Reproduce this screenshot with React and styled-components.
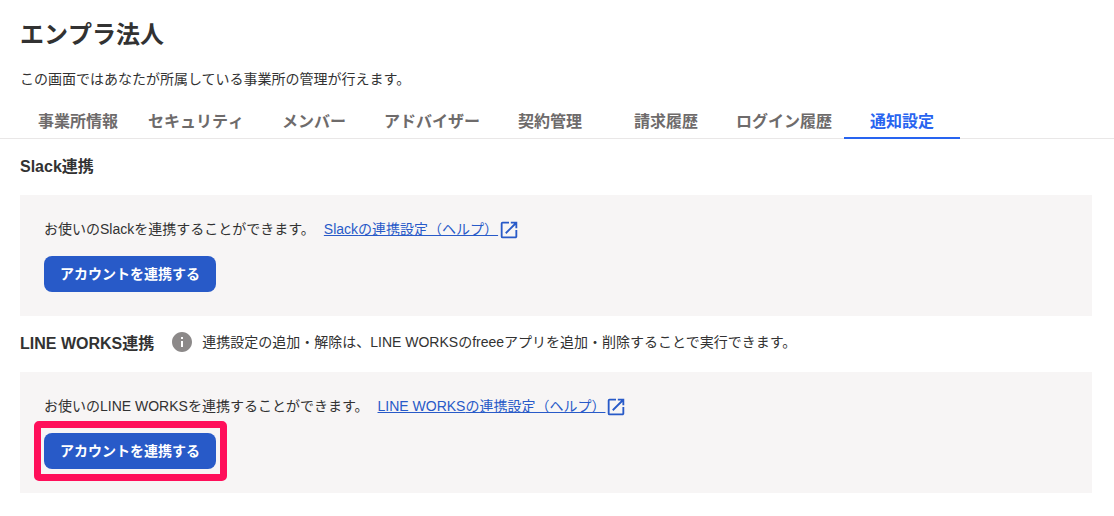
import styled, { createGlobalStyle } from "styled-components";

const tabs = [
  "事業所情報",
  "セキュリティ",
  "メンバー",
  "アドバイザー",
  "契約管理",
  "請求履歴",
  "ログイン履歴",
  "通知設定",
];

const OpenInNewIcon = () => (
  <LinkIcon viewBox="0 0 24 24" aria-hidden="true">
    <path d="M19 19H5V5h7V3H5a2 2 0 0 0-2 2v14a2 2 0 0 0 2 2h14c1.1 0 2-.9 2-2v-7h-2v7zM14 3v2h3.59l-9.83 9.83 1.41 1.41L19 6.41V10h2V3h-7z" />
  </LinkIcon>
);

const InfoIcon = () => (
  <NoteIcon viewBox="0 0 24 24" aria-hidden="true">
    <path d="M12 2C6.48 2 2 6.48 2 12s4.48 10 10 10 10-4.48 10-10S17.52 2 12 2zm1 15h-2v-6h2v6zm0-8h-2V7h2v2z" />
  </NoteIcon>
);

const Integration = ({ name, note, highlighted }) => (
  <section>
    <SectionHeader>
      <SectionTitle>{name}連携</SectionTitle>
      {note && (
        <Note>
          <InfoIcon />
          {note}
        </Note>
      )}
    </SectionHeader>
    <Panel>
      <Description>
        <span>お使いの{name}を連携することができます。</span>
        <HelpLink href="#help">
          <span>{name}の連携設定（ヘルプ）</span>
          <OpenInNewIcon />
        </HelpLink>
      </Description>
      <ButtonWrapper>
        <Button type="button">アカウントを連携する</Button>
        {highlighted && <Highlight />}
      </ButtonWrapper>
    </Panel>
  </section>
);

const App = () => (
  <>
    <GlobalStyle />
    <Header>
      <Title>エンプラ法人</Title>
      <Lead>この画面ではあなたが所属している事業所の管理が行えます。</Lead>
    </Header>
    <TabBar>
      {tabs.map((tab) => (
        <Tab
          key={tab}
          href="#tab"
          $active={tab === "通知設定"}
          aria-current={tab === "通知設定" ? "page" : undefined}
        >
          {tab}
        </Tab>
      ))}
    </TabBar>
    <Main>
      <Integration name="Slack" />
      <Integration
        name="LINE WORKS"
        note="連携設定の追加・解除は、LINE WORKSのfreeeアプリを追加・削除することで実行できます。"
        highlighted
      />
    </Main>
  </>
);

export default App;

const GlobalStyle = createGlobalStyle`
  * {
    box-sizing: border-box;
  }
  body {
    margin: 0;
    background-color: #fff;
    color: #323232;
    font-family: "Liberation Sans", "Noto Sans CJK JP", sans-serif;
    font-size: 14px;
    line-height: 21px;
  }
`;

const Header = styled.header`
  padding: 17px 20px 0;
`;

const Title = styled.h1`
  margin: 0 0 16px;
  font-size: 24px;
  line-height: 36px;
  font-kerning: none;
`;

const Lead = styled.p`
  margin: 0;
`;

const TabBar = styled.nav`
  display: flex;
  margin-top: 13px;
  padding: 0 20px;
  box-shadow: inset 0 -1px 0 #e9e7e7;
`;

const Tab = styled.a`
  min-width: 116px;
  padding: 8px 12px 4px;
  border-bottom: 2px solid ${({ $active }) => ($active ? "#2864f0" : "transparent")};
  color: ${({ $active }) => ($active ? "#2864f0" : "#6e6b6b")};
  font-size: 16px;
  font-weight: bold;
  font-kerning: none;
  line-height: 22px;
  text-align: center;
  text-decoration: none;
  white-space: nowrap;
`;

const Main = styled.main`
  padding: 16px 22px 24px 20px;
`;

const SectionHeader = styled.div`
  display: flex;
  align-items: flex-start;
  gap: 16px;
  min-height: 24px;
  margin-bottom: 16px;
`;

const SectionTitle = styled.h2`
  margin: 0;
  font-size: 16px;
  line-height: 24px;
`;

const Note = styled.p`
  display: flex;
  align-items: center;
  gap: 8px;
  height: 20px;
  margin: 0;
`;

const NoteIcon = styled.svg`
  flex: none;
  width: 24px;
  height: 24px;
  fill: #8c8989;
`;

const Panel = styled.div`
  margin-bottom: 16px;
  padding: 24px;
  background-color: #f7f5f5;
`;

const Description = styled.div`
  display: flex;
  gap: 9px;
  margin-bottom: 16px;
`;

const HelpLink = styled.a`
  display: flex;
  align-items: flex-start;
  height: 21px;
  color: #285ac8;
  text-decoration: underline;
`;

const LinkIcon = styled.svg`
  flex: none;
  width: 22px;
  height: 22px;
  fill: currentColor;
`;

const ButtonWrapper = styled.div`
  position: relative;
  width: fit-content;
`;

const Button = styled.button`
  display: block;
  height: 36px;
  padding: 0 16px 2px;
  border: none;
  border-radius: 8px;
  background-color: #285ac8;
  color: #fff;
  font-family: inherit;
  font-size: 14px;
  font-weight: bold;
  cursor: pointer;
`;

const Highlight = styled.div`
  position: absolute;
  inset: -12px -11px -12px -10px;
  border: 7px solid #ff0f5a;
  border-radius: 5px;
  pointer-events: none;
`;
